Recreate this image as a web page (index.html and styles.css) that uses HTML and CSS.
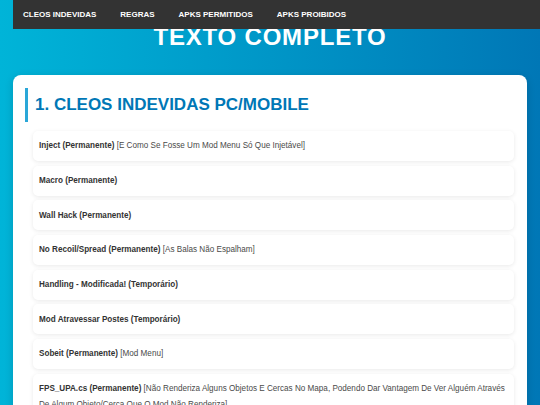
FILE: index.html
```html
<!DOCTYPE html>
<html lang="pt">
<head>
<meta charset="utf-8">
<title>Texto Completo</title>
<link rel="stylesheet" href="styles.css">
</head>
<body>
<nav class="topnav">
  <a href="#" class="nav-link">CLEOS INDEVIDAS</a>
  <a href="#" class="nav-link">REGRAS</a>
  <a href="#" class="nav-link">APKS PERMITIDOS</a>
  <a href="#" class="nav-link">APKS PROIBIDOS</a>
</nav>
<header class="page-header">
  <h1 class="page-title">TEXTO COMPLETO</h1>
</header>
<main class="card">
  <h2 class="section-title">1. CLEOS INDEVIDAS PC/MOBILE</h2>
  <ul class="rule-list">
    <li class="rule-item"><b>Inject (Permanente)</b> [E Como Se Fosse Um Mod Menu Só Que Injetável]</li>
    <li class="rule-item"><b>Macro (Permanente)</b></li>
    <li class="rule-item"><b>Wall Hack (Permanente)</b></li>
    <li class="rule-item"><b>No Recoil/Spread (Permanente)</b> [As Balas Não Espalham]</li>
    <li class="rule-item"><b>Handling - Modificada! (Temporário)</b></li>
    <li class="rule-item"><b>Mod Atravessar Postes (Temporário)</b></li>
    <li class="rule-item"><b>Sobeit (Permanente)</b> [Mod Menu]</li>
    <li class="rule-item"><b>FPS_UPA.cs (Permanente)</b> [Não Renderiza Alguns Objetos E Cercas No Mapa, Podendo Dar Vantagem De Ver Alguém Através De Algum Objeto/Cerca Que O Mod Não Renderiza]</li>
  </ul>
</main>
</body>
</html>
```

FILE: styles.css
```css
html, body {
  margin: 0;
  padding: 0;
}
body {
  font-family: "Liberation Sans", Arial, sans-serif;
  background: linear-gradient(90deg, #00b4d8 0%, #0096c7 50%, #0077b6 100%);
  min-height: 405px;
  padding-top: 23px;
}
.topnav {
  position: fixed;
  top: 0;
  left: 13px;
  right: 0;
  height: 29px;
  background: #333333;
  display: flex;
  align-items: center;
  padding-left: 10px;
  gap: 24px;
  z-index: 10;
}
.nav-link {
  color: #ffffff;
  text-decoration: none;
  font-weight: bold;
  font-size: 8px;
}
.page-header {
  margin: 0 0 24px;
}
.page-title {
  margin: 0;
  text-align: center;
  color: #ffffff;
  font-size: 24px;
  line-height: 28px;
  letter-spacing: 0.8px;
  font-weight: bold;
}
.card {
  display: block;
  margin: 0 13px;
  background: #ffffff;
  border-radius: 8px;
  padding: 13px 13px 20px 12px;
  box-shadow: 0 2px 8px rgba(0,0,0,0.15);
}
.section-title {
  margin: 0 0 9px;
  border-left: 3px solid #2aa7d8;
  padding-left: 7px;
  color: #0077b6;
  font-size: 17px;
  line-height: 34px;
  font-weight: bold;
}
.rule-list {
  list-style: none;
  margin: 0 0 0 8px;
  padding: 0;
  display: flex;
  flex-direction: column;
  gap: 4.7px;
}
.rule-item {
  background: #ffffff;
  border-radius: 5px;
  box-shadow: 0 1px 4px rgba(0,0,0,0.09);
  padding: 7px 6px;
  font-size: 8.15px;
  line-height: 15.5px;
  padding-top: 7.25px;
  padding-bottom: 7.25px;
  color: #4a4a4a;
}
.rule-item b {
  color: #333333;
}
```
